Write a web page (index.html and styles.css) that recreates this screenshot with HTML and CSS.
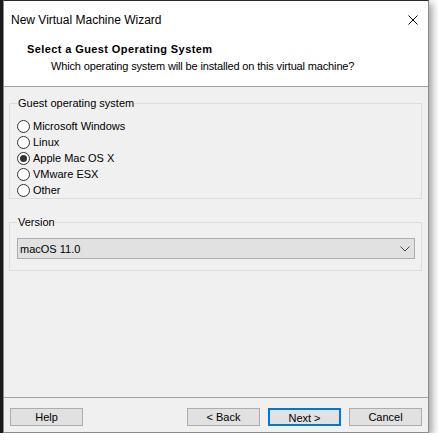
FILE: index.html
```html
<!DOCTYPE html>
<html lang="en">
<head>
    <meta charset="UTF-8">
    <meta name="viewport" content="width=device-width, initial-scale=1.0">
    <title>New Virtual Machine Wizard</title>
    <link rel="stylesheet" href="styles.css">
</head>
<body>

    <div class="desktop">
        <div class="backdrop"></div>

        <div class="window">
            <div class="titlebar">
                <span class="title">New Virtual Machine Wizard</span>
                <button class="close" aria-label="Close">
                    <svg width="10" height="10" viewBox="0 0 10 10">
                        <path d="M0.5 0.5 L9.5 9.5 M9.5 0.5 L0.5 9.5" stroke="#000" stroke-width="1" fill="none"/>
                    </svg>
                </button>
            </div>

            <div class="header">
                <h1>Select a Guest Operating System</h1>
                <p>Which operating system will be installed on this virtual machine?</p>
            </div>

            <div class="content">
                <fieldset class="group">
                    <legend>Guest operating system</legend>
                    <label class="radio"><span class="dot"></span>Microsoft Windows</label>
                    <label class="radio"><span class="dot"></span>Linux</label>
                    <label class="radio"><span class="dot checked"></span>Apple Mac OS X</label>
                    <label class="radio"><span class="dot"></span>VMware ESX</label>
                    <label class="radio"><span class="dot"></span>Other</label>
                </fieldset>

                <fieldset class="group version">
                    <legend>Version</legend>
                    <div class="combo">
                        <span>macOS 11.0</span>
                        <svg width="10" height="6" viewBox="0 0 10 6">
                            <path d="M0.5 0.5 L5 5 L9.5 0.5" stroke="#444" stroke-width="1" fill="none"/>
                        </svg>
                    </div>
                </fieldset>
            </div>

            <div class="footer">
                <button class="btn">Help</button>
                <div class="spacer"></div>
                <button class="btn">&lt; Back</button>
                <button class="btn default">Next &gt;</button>
                <button class="btn">Cancel</button>
            </div>
        </div>
    </div>

</body>
</html>
```

FILE: styles.css
```css
body {
    margin: 0;
    background-color: #fff;
    font-family: Tahoma, "Liberation Sans", sans-serif;
    font-size: 11px;
    color: #000;
}
.desktop {
    display: flex;
    align-items: flex-start;
}
/* dark window behind the dialog */
.backdrop {
    width: 3px;
    height: 433px;
    background-color: #1c1c1c;
}
.window {
    width: 424px;
    height: 431px;
    display: flex;
    flex-direction: column;
    border: 1px solid #8c8c8c;
    border-top-color: #2a2a2a;
    background-color: #f0f0f0;
    box-shadow: 3px 3px 8px rgba(0, 0, 0, 0.4);
}
.titlebar {
    height: 38px;
    display: flex;
    align-items: center;
    justify-content: space-between;
    padding-left: 7px;
    background-color: #fff;
}
.title {
    font-family: "Segoe UI", "Liberation Sans", sans-serif;
    font-size: 12px;
}
.close {
    width: 30px;
    height: 38px;
    border: none;
    background: none;
    padding: 0;
    display: flex;
    align-items: center;
    justify-content: center;
}
.header {
    background-color: #fff;
    padding: 3px 0 12px 23px;
    border-bottom: 1px solid #a0a0a0;
}
.header h1 {
    margin: 0;
    font-size: 11px;
    line-height: 15px;
    font-weight: bold;
    letter-spacing: 0.4px;
}
.header p {
    margin: 2px 0 0 24px;
    line-height: 15px;
    letter-spacing: -0.15px;
}
.content {
    flex: 1;
    padding-top: 8px;
}
.group {
    margin: 0 6px 0 5px;
    padding: 7px 6px 0 7px;
    border: 1px solid #dcdcdc;
    min-width: 0;
}
.group legend {
    padding: 0 1px;
    line-height: 16px;
}
.radio {
    display: flex;
    align-items: center;
    height: 16px;
    gap: 3px;
}
.dot {
    width: 11px;
    height: 11px;
    border: 1px solid #333;
    border-radius: 50%;
    background-color: #fff;
    display: flex;
    align-items: center;
    justify-content: center;
}
.dot.checked::after {
    content: "";
    width: 7px;
    height: 7px;
    border-radius: 50%;
    background-color: #333;
}
.version {
    margin-top: 15px;
    padding-top: 8px;
    padding-bottom: 11px;
}
.combo {
    height: 19px;
    display: flex;
    align-items: center;
    justify-content: space-between;
    padding: 0 4px 0 2px;
    border: 1px solid #adadad;
    background-color: #e1e1e1;
}
.footer {
    display: flex;
    gap: 8px;
    padding: 10px 6px 6px 6px;
    border-top: 1px solid #a0a0a0;
}
.spacer {
    flex: 1;
}
.btn {
    width: 73px;
    height: 18px;
    padding: 0;
    font-family: inherit;
    font-size: 11px;
    line-height: 16px;
    border: 1px solid #adadad;
    background-color: #e1e1e1;
    color: #000;
}
.btn.default {
    border: 2px solid #0078d7;
}
```
